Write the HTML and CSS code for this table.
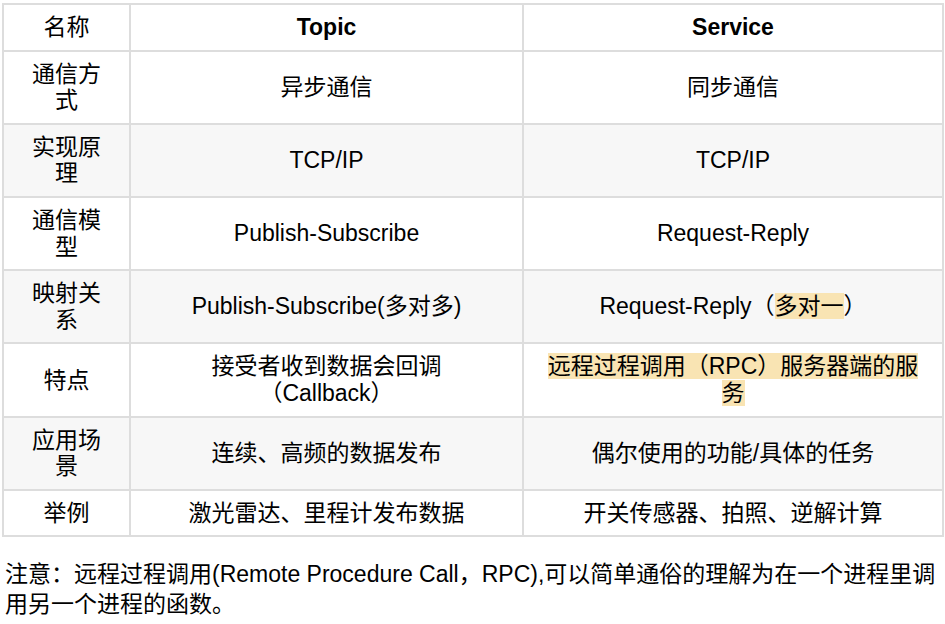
FILE: index.html
```html
<!DOCTYPE html>
<html lang="zh-CN">
<head>
<meta charset="utf-8">
<title>Topic vs Service</title>
<link rel="stylesheet" href="styles.css">
</head>
<body>
<table class="cmp">
  <colgroup>
    <col class="c1">
    <col class="c2">
    <col class="c3">
  </colgroup>
  <tbody>
    <tr>
      <td>名称</td>
      <td class="th">Topic</td>
      <td class="th">Service</td>
    </tr>
    <tr>
      <td>通信方式</td>
      <td>异步通信</td>
      <td>同步通信</td>
    </tr>
    <tr class="alt">
      <td>实现原理</td>
      <td>TCP/IP</td>
      <td>TCP/IP</td>
    </tr>
    <tr>
      <td>通信模型</td>
      <td>Publish-Subscribe</td>
      <td>Request-Reply</td>
    </tr>
    <tr class="alt">
      <td>映射关系</td>
      <td>Publish-Subscribe(多对多)</td>
      <td>Request-Reply（<span class="hl">多对一</span>）</td>
    </tr>
    <tr>
      <td>特点</td>
      <td>接受者收到数据会回调<br>（Callback）</td>
      <td><span class="hl">远程过程调用（RPC）服务器端的服务</span></td>
    </tr>
    <tr class="alt">
      <td>应用场景</td>
      <td>连续、高频的数据发布</td>
      <td>偶尔使用的功能/具体的任务</td>
    </tr>
    <tr>
      <td>举例</td>
      <td>激光雷达、里程计发布数据</td>
      <td>开关传感器、拍照、逆解计算</td>
    </tr>
  </tbody>
</table>
<p class="note">注意：远程过程调用(Remote Procedure Call，RPC),可以简单通俗的理解为在一个进程里调<br>用另一个进程的函数。</p>
</body>
</html>
```

FILE: styles.css
```css
html, body {
  margin: 0;
  padding: 0;
  background: #ffffff;
}

body {
  padding: 3px 2px 0 2px;
  font-family: "Liberation Sans", "Noto Sans CJK SC", sans-serif;
  font-size: 23px;
  color: #000000;
}

.cmp {
  border-collapse: collapse;
  table-layout: fixed;
  width: 940px;
}

.c1 { width: 127px; }
.c2 { width: 393px; }
.c3 { width: 420px; }

.cmp td {
  border: 2px solid #dddddd;
  padding: 9px 20px;
  line-height: 26.6px;
  text-align: center;
  vertical-align: middle;
}

.cmp .alt td {
  background: #f7f7f7;
}

.cmp .th {
  font-weight: bold;
}

.hl {
  background: #f9e4b3;
}

.note {
  margin: 22px 0 0 3px;
  line-height: 30px;
}
```
